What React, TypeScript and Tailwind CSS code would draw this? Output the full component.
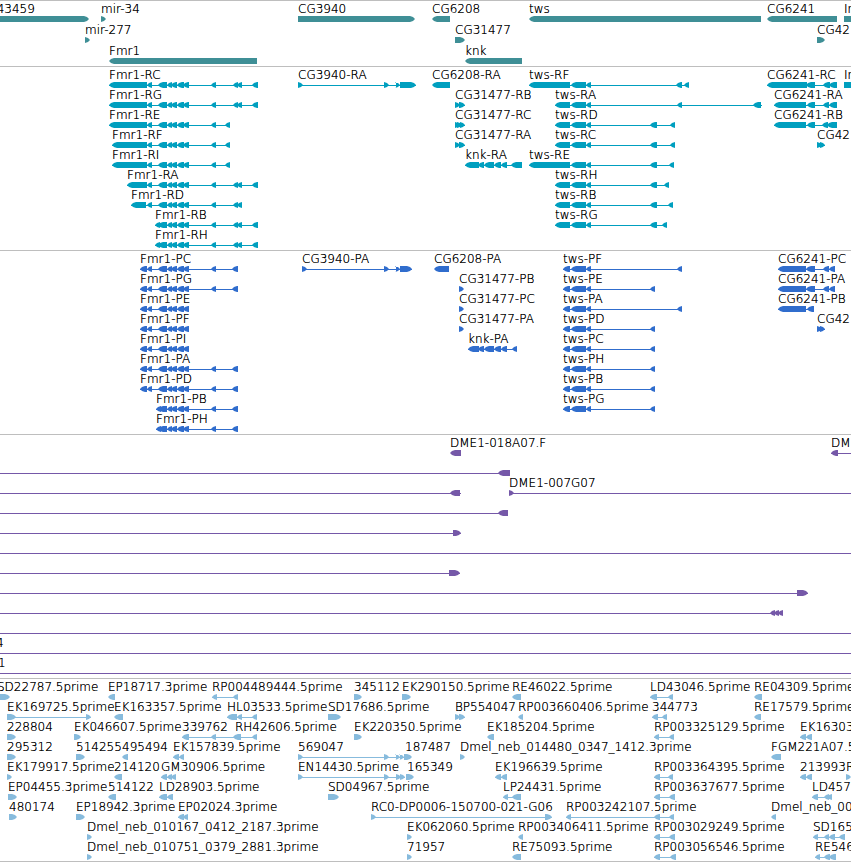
type Strand = "left" | "right";
type Span = [number, number];

interface Feature {
  label?: string;
  start: number;
  strand?: Strand;
  blocks: Span[];
  // extent of the thin connector, when it runs past the blocks
  line?: Span;
}

interface TrackData {
  name: string;
  fill: string;
  rowClass: string;
  rows: Feature[][];
}

const left = (label: string, start: number, ...blocks: Span[]): Feature => ({
  label,
  start,
  strand: "left",
  blocks,
});

const right = (label: string, start: number, ...blocks: Span[]): Feature => ({
  label,
  start,
  strand: "right",
  blocks,
});

// exons shared between the isoforms of a gene
const fmrCore: Span[] = [
  [158, 167],
  [167, 172],
  [171, 177],
  [177, 184],
  [183, 189],
];
const fmrMid: Span[] = [[147, 152], ...fmrCore];
const fmrLong: Span[] = [
  [211, 216],
  [233, 238],
  [237, 242],
  [252, 258],
];
const fmrShort: Span[] = [
  [211, 216],
  [225, 230],
];
const fmrProtein: Span[] = [
  [211, 216],
  [232, 238],
];
const twsCore: Span[] = [
  [571, 586],
  [586, 591],
];

const genes: Feature[][] = [
  [
    right("CG43459", -21, [-21, 89]),
    right("mir-34", 101, [101, 106]),
    right("CG3940", 298, [298, 415]),
    left("CG6208", 432, [432, 450]),
    left("tws", 529, [529, 761]),
    left("CG6241", 767, [767, 837]),
    right("In", 844, [844, 880]),
  ],
  [
    right("mir-277", 85, [85, 90]),
    right("CG31477", 455, [455, 465]),
    right("CG42", 817, [817, 825]),
  ],
  [left("Fmr1", 109, [109, 257]), left("knk", 465, [465, 522])],
];

const transcripts: Feature[][] = [
  [
    left("Fmr1-RC", 109, [109, 147], ...fmrMid, ...fmrLong),
    right("CG3940-RA", 298, [298, 303], [384, 389], [396, 400], [400, 416]),
    left("CG6208-RA", 432, [432, 450]),
    left("tws-RF", 529, [529, 570], ...twsCore, [676, 682], [684, 689]),
    left("CG6241-RC", 767, [767, 807], [806, 815], [823, 830], [829, 837]),
    right("In", 844, [844, 880]),
  ],
  [
    left("Fmr1-RG", 109, [109, 147], ...fmrMid, ...fmrLong),
    right("CG31477-RB", 455, [455, 460], [459, 465]),
    {
      ...left("tws-RA", 555, [555, 570], ...twsCore, [677, 682], [753, 761]),
      line: [555, 762],
    },
    left("CG6241-RA", 774, [774, 806], [807, 815], [823, 829], [829, 837]),
  ],
  [
    left("Fmr1-RE", 109, [109, 147], ...fmrMid, ...fmrShort),
    right("CG31477-RC", 455, [455, 460], [457, 462], [460, 465]),
    left("tws-RD", 555, [555, 570], ...twsCore, [650, 657], [670, 675]),
    left("CG6241-RB", 774, [774, 806], [807, 815], [822, 828], [827, 837]),
  ],
  [
    left("Fmr1-RF", 112, [112, 147], ...fmrMid, ...fmrShort),
    right("CG31477-RA", 455, [455, 460], [459, 465]),
    left("tws-RC", 555, [555, 570], ...twsCore, [650, 657], [670, 675]),
    right("CG42", 817, [817, 822], [820, 825]),
  ],
  [
    left("Fmr1-RI", 112, [112, 147], ...fmrMid, ...fmrShort),
    left("knk-RA", 465, [465, 479], [478, 484], [484, 494], [494, 501], [501, 507], [511, 522]),
    left("tws-RE", 529, [529, 570], ...twsCore, [650, 657], [669, 674]),
  ],
  [
    left("Fmr1-RA", 127, [127, 147], ...fmrMid, ...fmrLong),
    left("tws-RH", 555, [555, 570], ...twsCore, [650, 657], [664, 669]),
  ],
  [
    left("Fmr1-RD", 131, [131, 146], ...fmrMid, ...fmrLong.slice(0, 3)),
    left("tws-RB", 555, [555, 570], ...twsCore, [650, 657], [668, 673]),
  ],
  [
    left("Fmr1-RB", 155, [155, 160], ...fmrCore, ...fmrLong),
    left("tws-RG", 555, [555, 570], ...twsCore, [650, 657], [662, 667]),
  ],
  [left("Fmr1-RH", 155, [155, 160], ...fmrCore, ...fmrLong)],
];

const proteins: Feature[][] = [
  [
    left("Fmr1-PC", 140, [140, 147], ...fmrMid, ...fmrProtein),
    right("CG3940-PA", 302, [302, 307], [384, 389], [396, 400], [400, 412]),
    left("CG6208-PA", 434, [434, 449]),
    left("tws-PF", 563, [563, 570], ...twsCore, [677, 682]),
    left("CG6241-PC", 778, [778, 806], [806, 815], [823, 829], [829, 835]),
  ],
  [
    left("Fmr1-PG", 140, [140, 147], ...fmrMid, ...fmrProtein),
    right("CG31477-PB", 459, [459, 464]),
    left("tws-PE", 563, [563, 570], ...twsCore, [650, 655]),
    left("CG6241-PA", 778, [778, 806], [806, 815], [823, 829], [829, 835]),
  ],
  [
    left("Fmr1-PE", 140, [140, 147], ...fmrMid),
    right("CG31477-PC", 459, [459, 464]),
    left("tws-PA", 563, [563, 570], ...twsCore, [677, 682]),
    left("CG6241-PB", 778, [778, 806], [807, 814]),
  ],
  [
    left("Fmr1-PF", 140, [140, 147], ...fmrMid),
    right("CG31477-PA", 459, [459, 464]),
    left("tws-PD", 563, [563, 570], ...twsCore, [650, 655]),
    right("CG42", 817, [817, 822], [820, 825]),
  ],
  [
    left("Fmr1-PI", 140, [140, 147], ...fmrMid),
    left("knk-PA", 468, [468, 479], [478, 484], [484, 494], [494, 501], [501, 507], [512, 517]),
    left("tws-PC", 563, [563, 570], ...twsCore, [650, 655]),
  ],
  [
    left("Fmr1-PA", 140, [140, 147], ...fmrMid, ...fmrProtein),
    left("tws-PH", 563, [563, 570], ...twsCore, [650, 655]),
  ],
  [
    left("Fmr1-PD", 140, [140, 147], ...fmrMid, ...fmrProtein),
    left("tws-PB", 563, [563, 570], ...twsCore, [650, 655]),
  ],
  [
    left("Fmr1-PB", 156, [156, 161], ...fmrCore, ...fmrProtein),
    left("tws-PG", 563, [563, 570], ...twsCore, [650, 655]),
  ],
  [left("Fmr1-PH", 156, [156, 161], ...fmrCore, ...fmrProtein)],
];

// clone ends reach far past both sides of the view
const FAR = 4000;

const clones: Feature[][] = [
  [
    left("DME1-018A07.F", 450, [450, 461]),
    { ...left("DM", 831, [831, 838]), line: [831, FAR] },
  ],
  [{ start: 0, strand: "left", blocks: [[498, 510]], line: [0, 510] }],
  [
    { start: 0, strand: "left", blocks: [[450, 460]], line: [0, 461] },
    { ...right("DME1-007G07", 509, [509, 514]), line: [509, FAR] },
  ],
  [{ start: 0, strand: "left", blocks: [[498, 508]], line: [0, 508] }],
  [{ start: 0, strand: "right", blocks: [[453, 461]], line: [0, 461] }],
  [{ start: 0, blocks: [], line: [0, FAR] }],
  [{ start: 0, strand: "right", blocks: [[449, 460]], line: [0, 460] }],
  [{ start: 0, strand: "right", blocks: [[797, 808]], line: [0, 808] }],
  [
    {
      start: 0,
      strand: "left",
      blocks: [
        [770, 775],
        [774, 779],
        [778, 783],
      ],
      line: [0, 783],
    },
  ],
  [{ start: 0, blocks: [], line: [0, FAR] }],
  [{ label: "4", start: -4, blocks: [], line: [0, FAR] }],
  [{ label: "1", start: -2, blocks: [], line: [0, FAR] }],
];

const ests: Feature[][] = [
  [
    right("SD22787.5prime", -3, [-3, 10]),
    left("EP18717.3prime", 108, [108, 115]),
    left("RP004489444.5prime", 212, [212, 217], [233, 238]),
    right("345112", 354, [354, 362]),
    right("EK290150.5prime", 402, [402, 411]),
    left("RE46022.5prime", 512, [512, 521]),
    left("LD43046.5prime", 650, [650, 657], [668, 673]),
    left("RE04309.5prime", 754, [754, 762]),
  ],
  [
    right("EK169725.5prime", 7, [7, 16], [86, 91]),
    left("EK163357.5prime", 114, [114, 123]),
    left("HL03533.5prime", 227, [227, 237], [237, 242], [252, 257]),
    right("SD17686.5prime", 328, [328, 341]),
    right("BP554047", 455, [455, 460], [459, 465]),
    left("RP003660406.5prime", 518, [518, 523]),
    left("344773", 652, [652, 658], [662, 667]),
    left("RE17579.5prime", 754, [754, 761]),
  ],
  [
    right("228804", 7, [7, 16]),
    right("EK046607.5prime", 74, [74, 81]),
    left("339762", 182, [182, 189], [211, 216], [233, 240]),
    left("RH42606.5prime", 235, [235, 241], [252, 257]),
    right("EK220350.5prime", 354, [354, 362]),
    left("EK185204.5prime", 487, [487, 494]),
    left("RP003325129.5prime", 654, [654, 659], [669, 674]),
    left("EK16303", 800, [800, 806], [806, 812]),
  ],
  [
    right("295312", 7, [7, 16]),
    right("514255", 76, [76, 85]),
    left("495494", 122, [122, 128]),
    left("EK157839.5prime", 173, [173, 179], [179, 184]),
    right("569047", 298, [298, 303], [384, 389], [396, 400], [400, 404]),
    right("187487", 405, [404, 412]),
    right("Dmel_neb_014480_0347_1412.3prime", 460, [460, 465]),
    left("FGM221A07.5", 771, [771, 781]),
  ],
  [
    right("EK179917.5prime", 7, [7, 12]),
    left("214120", 114, [114, 122]),
    left("GM30906.5prime", 161, [161, 167], [167, 172], [171, 176]),
    right("EN14430.5prime", 298, [298, 303], [384, 389], [396, 401], [400, 405]),
    right("165349", 407, [406, 414]),
    left("EK196639.5prime", 495, [495, 501], [501, 507]),
    left("RP003364395.5prime", 654, [654, 660], [668, 673]),
    left("213993", 800, [800, 806], [806, 812]),
    right("R", 846, [846, 851]),
  ],
  [
    right("EP04455.3prime", 8, [8, 17]),
    left("514122", 108, [108, 116]),
    left("LD28903.5prime", 159, [159, 167], [167, 173]),
    right("SD04967.5prime", 328, [328, 339]),
    left("LP24431.5prime", 503, [503, 508], [512, 521]),
    left("RP003637677.5prime", 654, [654, 660], [669, 675]),
    left("LD457", 812, [812, 818], [824, 829], [827, 832]),
  ],
  [
    right("480174", 9, [9, 17]),
    right("EP18942.3prime", 76, [76, 85]),
    left("EP02024.3prime", 178, [178, 184], [183, 188]),
    right("RC0-DP0006-150700-021-G06", 371, [371, 376], [545, 552]),
    left("RP003242107.5prime", 566, [566, 571], [654, 660], [669, 674]),
    left("Dmel_neb_00", 771, [771, 776]),
  ],
  [
    right("Dmel_neb_010167_0412_2187.3prime", 87, [87, 92]),
    right("EK062060.5prime", 407, [407, 412]),
    left("RP003406411.5prime", 518, [518, 523]),
    left("RP003029249.5prime", 654, [654, 660], [669, 675]),
    left("SD165", 813, [813, 818], [824, 829], [829, 835], [839, 845]),
  ],
  [
    right("Dmel_neb_010751_0379_2881.3prime", 87, [87, 92]),
    right("71957", 407, [407, 412]),
    left("RE75093.5prime", 512, [512, 521]),
    left("RP003056546.5prime", 654, [654, 660], [670, 676]),
    left("RE546", 815, [815, 820], [824, 830], [829, 836]),
  ],
];

const tracks: TrackData[] = [
  { name: "Genes", fill: "fill-[#3f8f96]", rowClass: "h-[21px]", rows: genes },
  { name: "Transcripts", fill: "fill-[#009fbf]", rowClass: "h-5", rows: transcripts },
  { name: "Proteins", fill: "fill-[#306dcd]", rowClass: "h-5", rows: proteins },
  { name: "Clones", fill: "fill-[#7558a8]", rowClass: "h-5", rows: clones },
  { name: "ESTs", fill: "fill-[#87bbdd]", rowClass: "h-5", rows: ests },
];

const blockPoints = ([s, e]: Span, strand?: Strand) =>
  strand === "right"
    ? `${s},0 ${e - 5},0 ${e - 2},1 ${e},3 ${e - 2},5 ${e - 5},6 ${s},6`
    : `${e},0 ${s + 5},0 ${s + 2},1 ${s},3 ${s + 2},5 ${s + 5},6 ${e},6`;

const Glyph = ({ feature }: { feature: Feature }) => {
  const { blocks, strand, line } = feature;
  const [from, to] = line ?? [blocks[0][0], blocks[blocks.length - 1][1]];
  return (
    <g>
      {(line || blocks.length > 1) && (
        <rect x={from} y={3} width={to - from} height={1} />
      )}
      {blocks.map((block, i) => (
        <polygon key={i} points={blockPoints(block, strand)} />
      ))}
    </g>
  );
};

const Row = ({ features, track }: { features: Feature[]; track: TrackData }) => (
  <div className={`relative ${track.rowClass}`}>
    <svg className={`absolute left-0 top-[15px] h-[6px] w-full ${track.fill}`}>
      {features.map((feature, i) => (
        <Glyph key={i} feature={feature} />
      ))}
    </svg>
    {features
      .filter((feature) => feature.label)
      .map((feature) => (
        <span
          key={feature.label}
          className="absolute top-0 leading-4 whitespace-nowrap"
          style={{ left: feature.start }}
        >
          {feature.label}
        </span>
      ))}
  </div>
);

const Track = ({ track }: { track: TrackData }) => (
  <section
    aria-label={track.name}
    className="overflow-hidden border-t border-[#bebebe] pb-[3px] first:pb-[2px] last:border-b last:pb-[2px]"
  >
    {track.rows.map((features, i) => (
      <Row key={i} features={features} track={track} />
    ))}
  </section>
);

export default function App() {
  return (
    <main className="flex w-full flex-col overflow-hidden bg-white font-['DejaVu_Sans',sans-serif] text-[12px] font-extralight text-black [text-shadow:0_0_0_#000]">
      {tracks.map((track) => (
        <Track key={track.name} track={track} />
      ))}
    </main>
  );
}
